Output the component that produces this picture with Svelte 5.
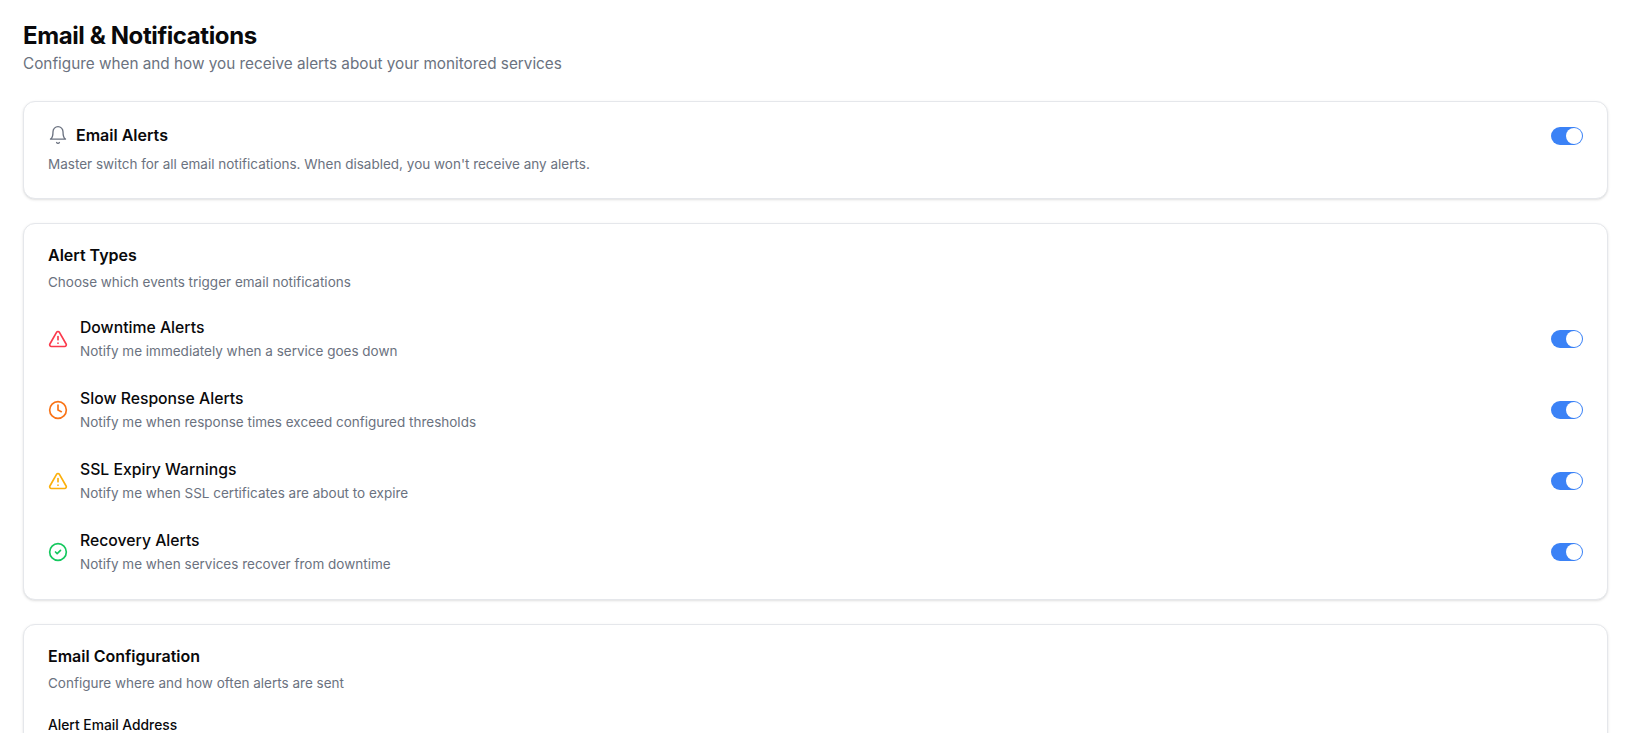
<script>
	let emailAlerts = $state(true);

	let alertTypes = $state([
		{ id: 'downtime', icon: 'triangle', color: '#fb3a4c', title: 'Downtime Alerts', desc: 'Notify me immediately when a service goes down', on: true },
		{ id: 'slow', icon: 'clock', color: '#f97316', title: 'Slow Response Alerts', desc: 'Notify me when response times exceed configured thresholds', on: true },
		{ id: 'ssl', icon: 'triangle', color: '#fbb00c', title: 'SSL Expiry Warnings', desc: 'Notify me when SSL certificates are about to expire', on: true },
		{ id: 'recovery', icon: 'check', color: '#14c85e', title: 'Recovery Alerts', desc: 'Notify me when services recover from downtime', on: true }
	]);
</script>

{#snippet toggle(checked, onclick)}
	<button class="switch" class:on={checked} role="switch" aria-checked={checked} aria-label="Toggle" {onclick}>
		<span class="thumb"></span>
	</button>
{/snippet}

<div class="page">
	<header>
		<h1>Email &amp; Notifications</h1>
		<p class="lead">Configure when and how you receive alerts about your monitored services</p>
	</header>

	<section class="card master">
		<div>
			<div class="title-row">
				<svg class="bell" viewBox="0 0 24 24" fill="none" stroke="currentColor" stroke-width="1.6" stroke-linecap="round" stroke-linejoin="round">
					<path d="M6 8a6 6 0 0 1 12 0c0 7 3 9 3 9H3s3-2 3-9" />
					<path d="M10.3 21a1.94 1.94 0 0 0 3.4 0" />
				</svg>
				<h2>Email Alerts</h2>
			</div>
			<p class="desc">Master switch for all email notifications. When disabled, you won't receive any alerts.</p>
		</div>
		{@render toggle(emailAlerts, () => (emailAlerts = !emailAlerts))}
	</section>

	<section class="card">
		<h2>Alert Types</h2>
		<p class="desc">Choose which events trigger email notifications</p>
		<ul>
			{#each alertTypes as item}
				<li>
					<svg class="icon" style="color: {item.color}" viewBox="0 0 24 24" fill="none" stroke="currentColor" stroke-width="2" stroke-linecap="round" stroke-linejoin="round">
						{#if item.icon === 'triangle'}
							<path d="m21.73 18-8-14a2 2 0 0 0-3.48 0l-8 14A2 2 0 0 0 4 21h16a2 2 0 0 0 1.73-3" />
							<path d="M12 9v4" />
							<path d="M12 17h.01" />
						{:else if item.icon === 'clock'}
							<circle cx="12" cy="12" r="10" />
							<polyline points="12 6 12 12 16 14" />
						{:else}
							<circle cx="12" cy="12" r="10" />
							<path d="m9 12 2 2 4-4" />
						{/if}
					</svg>
					<div class="item-text">
						<div class="item-title">{item.title}</div>
						<div class="desc">{item.desc}</div>
					</div>
					{@render toggle(item.on, () => (item.on = !item.on))}
				</li>
			{/each}
		</ul>
	</section>

	<section class="card">
		<h2>Email Configuration</h2>
		<p class="desc">Configure where and how often alerts are sent</p>
		<label for="alert-email">Alert Email Address</label>
	</section>
</div>

<style>
	:global(body) {
		background: #fff;
		color: #09090b;
		font-family: Inter, "Liberation Sans", sans-serif;
		overflow: hidden;
	}
	.page {
		height: 733px;
		overflow: hidden;
		box-sizing: border-box;
		padding: 22px 18px 0 23px;
		display: flex;
		flex-direction: column;
		gap: 24px;
	}
	header {
		padding-bottom: 1px;
	}
	h1 {
		margin: 0;
		font-size: 24px;
		line-height: 28px;
		font-weight: 700;
		letter-spacing: -0.4px;
	}
	.lead {
		margin: 2px 0 0;
		font-size: 15.3px;
		line-height: 24px;
		color: #6b7280;
	}
	.card {
		flex: none;
		border: 1px solid #e5e7eb;
		border-radius: 12px;
		box-shadow: 0 1px 3px rgb(0 0 0 / 0.1), 0 1px 2px -1px rgb(0 0 0 / 0.1);
		padding: 19px 24px 25px;
		background: #fff;
	}
	.master {
		display: flex;
		justify-content: space-between;
		align-items: flex-start;
		padding-top: 21px;
		padding-bottom: 24px;
	}
	.master .switch {
		margin-top: 4px;
	}
	.master p.desc {
		margin-top: 7px;
	}
	.title-row {
		display: flex;
		align-items: center;
		gap: 8px;
	}
	.bell {
		width: 20px;
		height: 20px;
		color: #6b7280;
	}
	h2 {
		margin: 0;
		font-size: 16px;
		line-height: 24px;
		font-weight: 600;
	}
	.desc {
		margin: 0;
		font-size: 13.5px;
		line-height: 20px;
		color: #6b7280;
	}
	p.desc {
		margin-top: 5px;
	}
	ul {
		list-style: none;
		margin: 24px 0 0;
		padding: 0;
		display: flex;
		flex-direction: column;
		gap: 26px;
	}
	li {
		display: flex;
		align-items: center;
		gap: 12px;
	}
	.icon {
		width: 20px;
		height: 20px;
		flex: none;
	}
	.item-text {
		flex: 1;
	}
	.item-text .desc {
		margin-top: 1px;
	}
	.item-title {
		font-size: 15.75px;
		line-height: 24px;
		font-weight: 500;
	}
	.switch {
		flex: none;
		width: 32px;
		height: 18px;
		padding: 1px;
		border: none;
		border-radius: 9px;
		background: #d1d5db;
		display: flex;
	}
	.switch.on {
		background: #3b82f6;
		justify-content: flex-end;
	}
	.thumb {
		width: 16px;
		height: 16px;
		border-radius: 50%;
		background: #fff;
	}
	label {
		display: block;
		margin-top: 22px;
		font-size: 13.8px;
		line-height: 20px;
		font-weight: 500;
	}
</style>
